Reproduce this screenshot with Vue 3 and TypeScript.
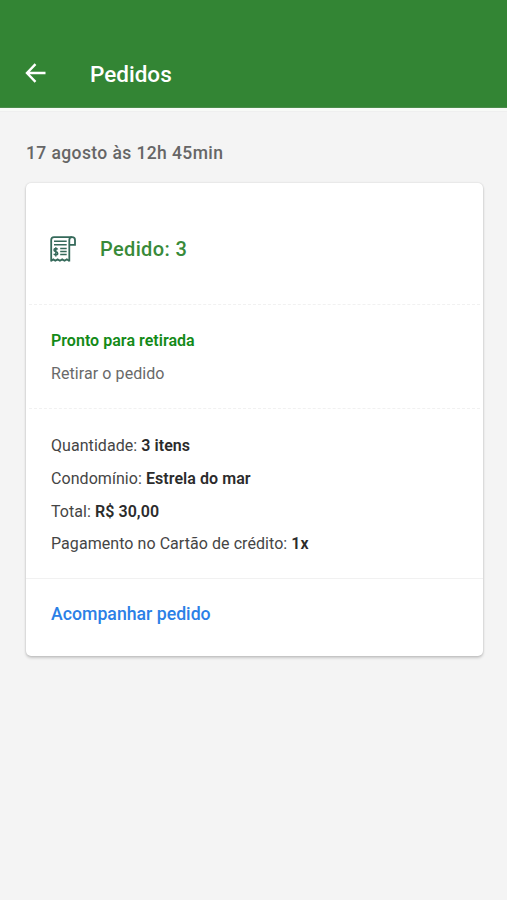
<script setup lang="ts">
interface Detail {
  label: string
  value: string
}

const order = {
  date: '17 agosto às 12h 45min',
  title: 'Pedido: 3',
  status: 'Pronto para retirada',
  hint: 'Retirar o pedido',
}

const details: Detail[] = [
  { label: 'Quantidade:', value: '3 itens' },
  { label: 'Condomínio:', value: 'Estrela do mar' },
  { label: 'Total:', value: 'R$ 30,00' },
  { label: 'Pagamento no Cartão de crédito:', value: '1x' },
]
</script>

<template>
  <div class="screen">
    <header class="toolbar">
      <button class="back" aria-label="Voltar">
        <svg width="22" height="20" viewBox="0 0 22 20" fill="none" stroke="#fff" stroke-width="2.4">
          <path d="M20.5 10H2.5M10.5 1.2L2 10L10.5 18.8" />
        </svg>
      </button>
      <h1>Pedidos</h1>
    </header>
    <main>
      <h2 class="date">{{ order.date }}</h2>
      <article class="card">
        <section class="head">
          <svg class="receipt" width="26" height="27" viewBox="0 0 26 27" fill="none" stroke="#35695a" stroke-width="1.8">
            <path d="M1.2 25.5V4Q1.2 1.2 4 1.2H22.2Q25 1.2 25 4V8.8H19.3" />
            <path d="M22 1.2Q19.3 1.4 19.3 4V25.5" />
            <path d="M1.2 24.8L3.3 23.4L5.3 24.8L7.6 23.4L9.9 24.8L12.2 23.4L14.5 24.8L16.8 23.4L19.3 24.8" />
            <path d="M4 5.2H16.7M4 8.7H16.7M10.2 12.6H16.7M10.2 15.6H16.7M10.2 18.6H16.7" stroke-width="1.5" />
            <path d="M7.6 13.5Q7.1 12.6 5.8 12.6Q4 12.6 4 14.1Q4 15.4 5.8 15.7Q7.7 16 7.7 17.4Q7.7 18.9 5.8 18.9Q4.3 18.9 3.8 17.8M5.8 11.2V20.4" stroke-width="1.5" />
          </svg>
          <h3>{{ order.title }}</h3>
        </section>
        <section class="status">
          <p class="ready">{{ order.status }}</p>
          <p class="hint">{{ order.hint }}</p>
        </section>
        <section class="details">
          <p v-for="d in details" :key="d.label">{{ d.label }} <strong>{{ d.value }}</strong></p>
        </section>
        <footer><a>Acompanhar pedido</a></footer>
      </article>
    </main>
  </div>
</template>

<style>
body {
  margin: 0;
  background: #f4f4f4;
}
</style>

<style scoped>
.screen {
  min-height: 900px;
  background: #f4f4f4;
  font-family: Roboto, sans-serif;
}
h1, h2, h3, p {
  margin: 0;
  font-weight: 500;
}
.toolbar {
  box-sizing: border-box;
  height: 108px;
  padding: 39px 25px 0;
  display: flex;
  align-items: center;
  background: #338534;
  border-bottom: 1px solid #4b8c4b;
  box-shadow: 0 3px 0 #f8faf7, 0 4px 0 #efefef;
}
.back {
  display: flex;
  width: 22px;
  padding: 0;
  margin-right: 43px;
  border: 0;
  background: none;
}
h1 {
  color: #fff;
  font-size: 22.5px;
  line-height: 30px;
  padding-top: 2px;
}
main {
  padding: 33px 24px 0 26px;
}
.date {
  color: #666;
  font-size: 17.5px;
  letter-spacing: 0.4px;
  line-height: 24px;
  margin-bottom: 18px;
}
.card {
  box-sizing: border-box;
  height: 473px;
  background: #fff;
  border-radius: 5px;
  box-shadow: 0 0 2px rgba(0, 0, 0, 0.16), 0 2px 3px rgba(0, 0, 0, 0.18);
}
.head {
  box-sizing: border-box;
  height: 121px;
  padding: 11px 24px 0;
  display: flex;
  align-items: center;
  gap: 24px;
}
h3 {
  color: #388a39;
  font-size: 20px;
  letter-spacing: 0.35px;
  line-height: 28px;
}
.status {
  box-sizing: border-box;
  height: 104px;
  margin: 0 3px;
  padding: 19px 22px 0;
  border-top: 1px dashed #f1f1f1;
  font-size: 16px;
  line-height: 33px;
}
.ready {
  color: #138a17;
  font-weight: 600;
  letter-spacing: 0.03px;
}
.hint {
  color: #696969;
  font-weight: 400;
  letter-spacing: 0.08px;
}
.details {
  box-sizing: border-box;
  height: 170px;
  margin: 0 3px;
  padding: 21px 22px 0;
  border-top: 1px dashed #f1f1f1;
}
.details p {
  color: #454545;
  font-size: 16px;
  letter-spacing: 0.06px;
  font-weight: 400;
  line-height: 32.8px;
}
strong {
  color: #2b2b2b;
  font-weight: 600;
}
footer {
  padding: 19px 25px 0;
  border-top: 1px solid #f1f1f1;
}
footer a {
  color: #2b80e6;
  font-size: 17.7px;
  font-weight: 500;
  line-height: 33px;
}
</style>
